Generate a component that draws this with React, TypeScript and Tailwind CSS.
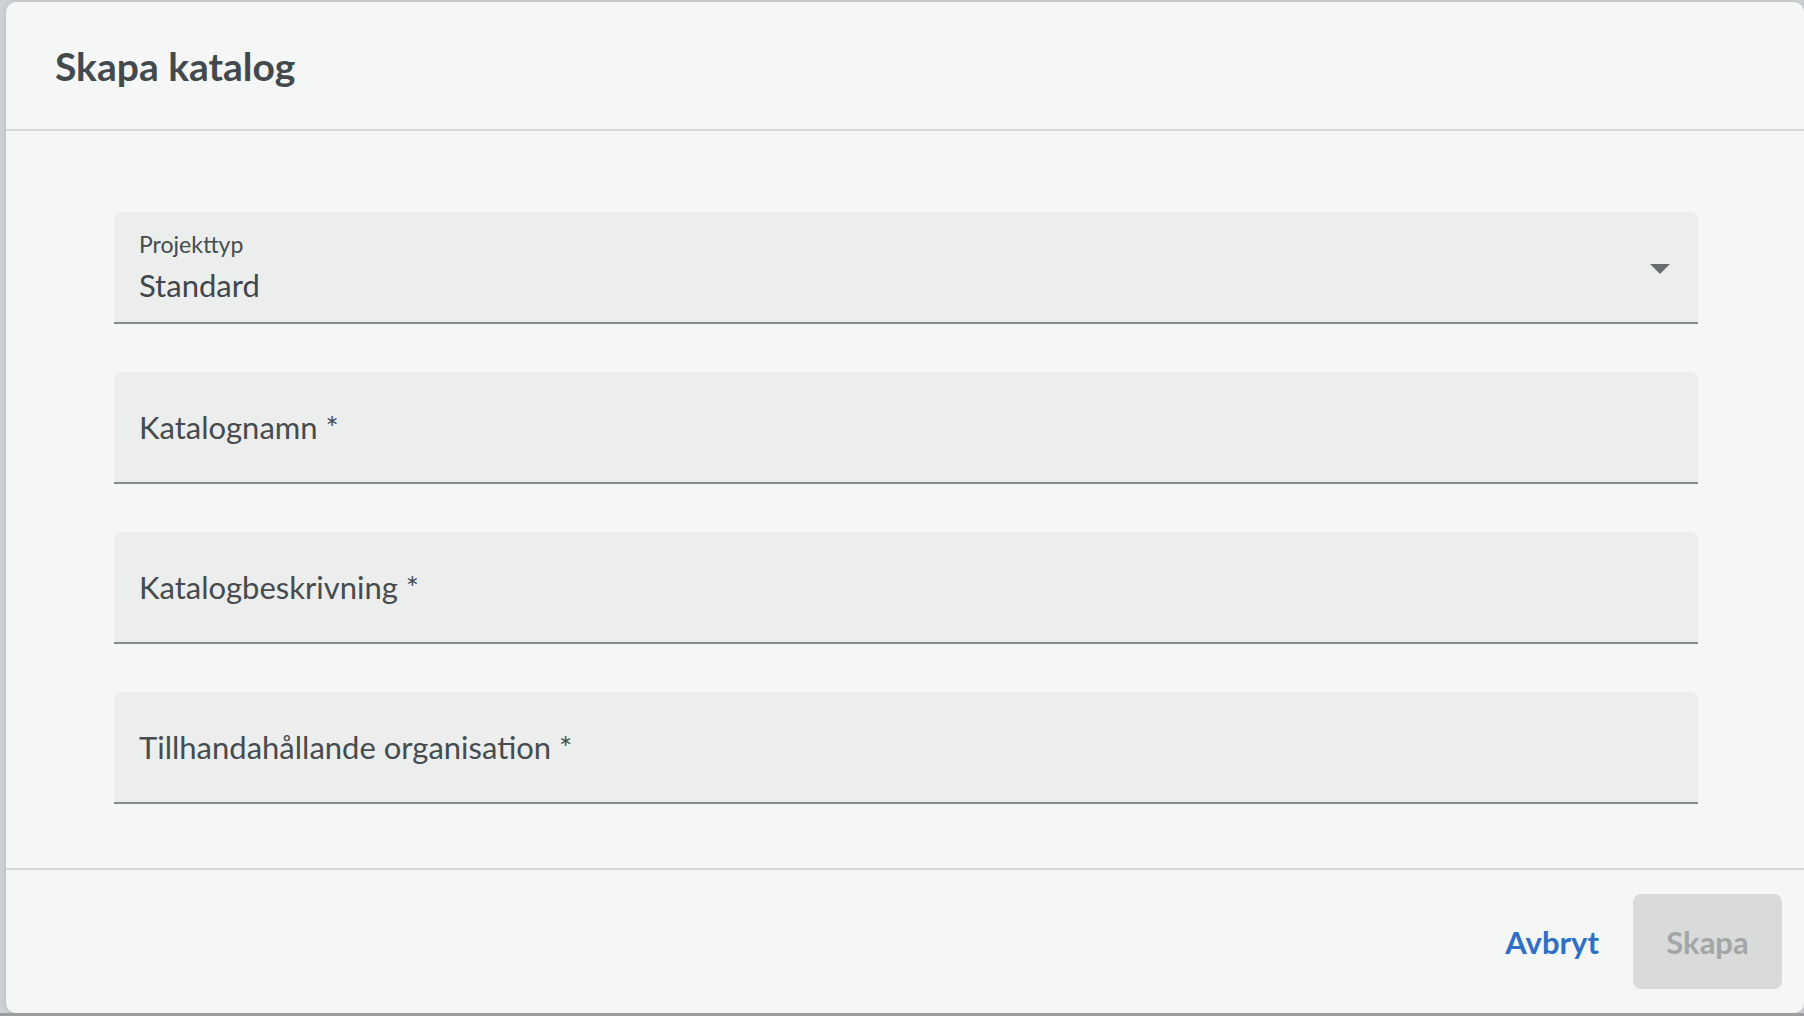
const font = { fontFamily: 'Lato, "Noto Sans", sans-serif' };

function SelectField({ label, value }: { label: string; value: string }) {
  return (
    <div className="relative h-[112px] rounded-t-[8px] border-b-2 border-[#858b90] bg-[#eceeed] pl-[25px] pt-[18px]">
      <div className="text-[23px] leading-[28px] text-[#454b4f]">{label}</div>
      <div className="mt-[9px] text-[31px] leading-[36px] text-[#40464a]">{value}</div>
      <svg
        className="absolute right-[28px] top-[52px]"
        width="20"
        height="10"
        viewBox="0 0 20 10"
      >
        <path d="M0 0 L20 0 L10 10 Z" fill="#6a6d70" />
      </svg>
    </div>
  );
}

function TextField({ label }: { label: string }) {
  return (
    <div className="flex h-[112px] items-center rounded-t-[8px] border-b-2 border-[#858b90] bg-[#eceeed] pl-[25px]">
      <span className="text-[31px] leading-[36px] text-[#454b4f]">{label}</span>
    </div>
  );
}

export default function App() {
  return (
    <div className="flex h-screen w-full flex-col bg-[#cfd2d4]" style={font}>
      <div className="flex flex-1 pl-[6px] pt-[2px]">
        <div className="flex h-[1011px] flex-1 flex-col rounded-[10px] bg-[#f5f7f6] shadow-[0_0_6px_rgba(0,0,0,0.12)]">
          <div className="flex h-[129px] items-center border-b-2 border-[#d6d9d9] pl-[49px]">
            <h1 className="text-[39px] font-bold leading-[48px] text-[#43494d]">Skapa katalog</h1>
          </div>

          <div className="flex flex-col gap-[48px] pb-[64px] pl-[108px] pr-[106px] pt-[81px]">
            <SelectField label="Projekttyp" value="Standard" />
            <TextField label="Katalognamn *" />
            <TextField label="Katalogbeskrivning *" />
            <TextField label="Tillhandahållande organisation *" />
          </div>

          <div className="flex flex-1 items-center justify-end border-t-2 border-[#d6d9d9] pr-[22px]">
            <button className="h-[95px] px-[34px] text-[31px] font-bold leading-[36px] text-[#2f6fc6]">
              Avbryt
            </button>
            <button
              disabled
              className="h-[95px] w-[149px] rounded-[8px] bg-[#d9dbda] text-[31px] font-bold leading-[36px] text-[#a3a6a6]"
            >
              Skapa
            </button>
          </div>
        </div>
      </div>
      <div className="h-[3px] bg-[#9c9e9e]" />
    </div>
  );
}
